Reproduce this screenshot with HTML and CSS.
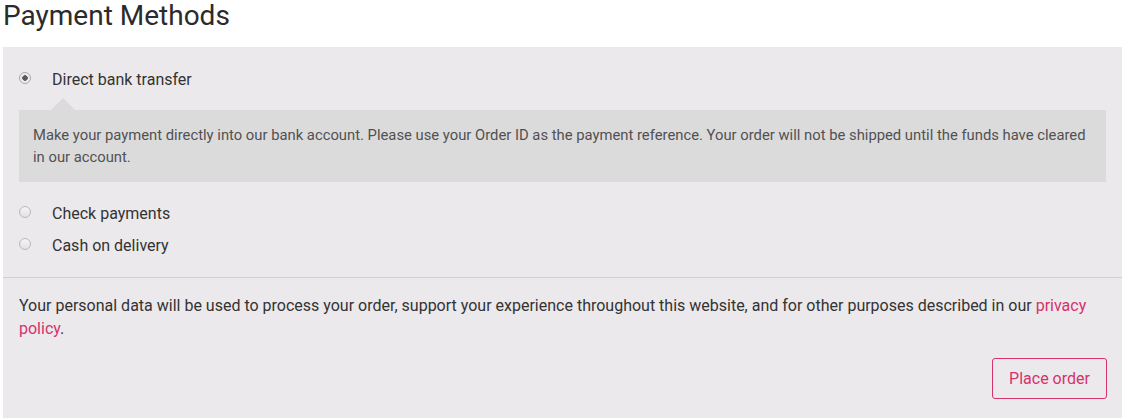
FILE: index.html
```html
<!DOCTYPE html>
<html lang="en">
<head>
<meta charset="utf-8">
<title>Payment Methods</title>
<link rel="stylesheet" href="styles.css">
</head>
<body>
<div class="page">
  <h3 class="title">Payment Methods</h3>
  <div class="checkout">
    <ul class="methods">
      <li class="method">
        <label class="method-row"><input type="radio" name="pm" class="radio" checked><span class="method-label">Direct bank transfer</span></label>
        <div class="payment-box">
          <p>Make your payment directly into our bank account. Please use your Order ID as the payment reference. Your order will not be shipped until the funds have cleared in our account.</p>
        </div>
      </li>
      <li class="method">
        <label class="method-row"><input type="radio" name="pm" class="radio"><span class="method-label">Check payments</span></label>
      </li>
      <li class="method">
        <label class="method-row"><input type="radio" name="pm" class="radio"><span class="method-label">Cash on delivery</span></label>
      </li>
    </ul>
    <div class="place-order">
      <p class="privacy">Your personal data will be used to process your order, support your experience throughout this website, and for other purposes described in our <a href="#" class="link">privacy policy</a>.</p>
      <div class="actions">
        <button type="button" class="btn">Place order</button>
      </div>
    </div>
  </div>
</div>
</body>
</html>
```
FILE: styles.css
```css
* { box-sizing: border-box; }
html, body { margin: 0; padding: 0; background: #fff; }
body {
  font-family: Roboto, "Liberation Sans", Arial, sans-serif;
  color: #333;
}
.page { padding: 0 3px; }
.title {
  margin: 0;
  font-size: 28px;
  font-weight: 400;
  line-height: 31px;
  color: #2b2b2b;
  height: 47px;
}
.checkout {
  background: #ebe9eb;
  min-height: 371px;
}
.methods {
  list-style: none;
  margin: 0;
  padding: 16px 16px 16px 16px;
  border-bottom: 1px solid #d3ced2;
}
.method-row {
  display: flex;
  align-items: center;
  height: 32px;
  font-size: 16px;
  color: #333;
}
.radio {
  appearance: none;
  -webkit-appearance: none;
  width: 12px;
  height: 12px;
  margin: 0 21px -1px 0;
  border-radius: 50%;
  border: 1px solid #b9b9b9;
  background: linear-gradient(#f4f4f4, #e2e2e2);
  position: relative;
  top: -2px;
  flex: none;
}
.radio:checked {
  background: radial-gradient(circle, #5a5a5a 0 2.5px, #ececec 3px);
  border-color: #a9a9a9;
}
.payment-box {
  position: relative;
  margin: 15px 0;
  padding: 14px 6px 14px 14px;
  background: #dcdbdc;
  font-size: 14.8px;
  line-height: 22px;
  color: #515151;
}
.payment-box::before {
  content: "";
  position: absolute;
  left: 32px;
  top: -12px;
  border: 12px solid transparent;
  border-top: 0;
  border-bottom-color: #dcdbdc;
}
.payment-box p { margin: 0; }
.place-order { padding: 16px 15px 16px 16px; }
.privacy {
  margin: 0;
  font-size: 16px;
  line-height: 23px;
  color: #333;
}
.link { color: #d6336c; text-decoration: none; }
.actions {
  display: flex;
  justify-content: flex-end;
  margin-top: 18px;
}
.btn {
  font-family: inherit;
  font-size: 16px;
  color: #d6336c;
  background: transparent;
  border: 1px solid #d6336c;
  border-radius: 3px;
  width: 115px;
  height: 41px;
  padding: 0;
  cursor: pointer;
}
```
